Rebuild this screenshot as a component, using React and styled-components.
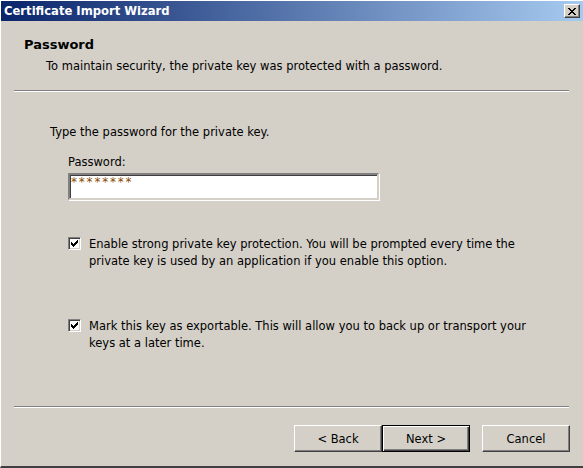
import React from 'react'
import styled, { createGlobalStyle } from 'styled-components'

const GlobalStyle = createGlobalStyle`
  html, body {
    margin: 0;
    padding: 0;
    background: #d4d0c8;
  }
  * {
    box-sizing: border-box;
  }
`

const Window = styled.div`
  width: 583px;
  height: 468px;
  display: flex;
  flex-direction: column;
  background: #d4d0c8;
  border-top: 1px solid #ffffff;
  border-left: 1px solid #ffffff;
  border-bottom: 2px solid #404040;
  font-family: "DejaVu Sans", Tahoma, sans-serif;
  font-size: 11.5px;
  color: #000;
  overflow: hidden;
`

const TitleBar = styled.div`
  height: 20px;
  flex: none;
  display: flex;
  align-items: center;
  justify-content: space-between;
  padding: 0 3px 0 3px;
  background: linear-gradient(to right, #0a246a, #a6caf0);
`

const TitleText = styled.div`
  color: #fff;
  font-weight: bold;
  font-size: 11.6px;
`

const CloseButton = styled.div`
  width: 16px;
  height: 14px;
  display: flex;
  align-items: center;
  justify-content: center;
  background: #d4d0c8;
  border: 1px solid;
  border-color: #fff #404040 #404040 #fff;
  box-shadow: inset -1px -1px #808080;
`

const Header = styled.div`
  padding: 16px 0 0 23px;
  height: 69px;
  flex: none;
`

const Heading = styled.div`
  font-weight: bold;
  font-size: 13px;
  line-height: 15px;
`

const Subtitle = styled.div`
  margin: 7px 0 0 22px;
  line-height: 14px;
`

const Separator = styled.div`
  flex: none;
  margin: 0 14px 0 13px;
  border-top: 1px solid #808080;
  border-bottom: 1px solid #ffffff;
`

const Body = styled.div`
  flex: 1;
  padding: 33px 0 0 49px;
`

const Prompt = styled.div`
  line-height: 14px;
`

const Field = styled.div`
  margin: 16px 0 0 18px;
`

const Label = styled.div`
  line-height: 14px;
  margin-bottom: 4px;
`

const PasswordBox = styled.div`
  width: 311px;
  height: 27px;
  background: #fff;
  border: 2px solid;
  border-color: #808080 #d4d0c8 #d4d0c8 #808080;
  box-shadow: inset 1px 1px #404040, 1px 1px #fff;
  padding: 2px 0 0 1px;
  color: #8b4a00;
  font-size: 12px;
  line-height: 10px;
  letter-spacing: 1.8px;
`

const CheckRow = styled.div`
  display: flex;
  align-items: flex-start;
  margin: ${p => p.$top}px 0 0 18px;
`

const Box = styled.div`
  width: 13px;
  height: 13px;
  flex: none;
  margin-top: 1px;
  background: #fff;
  border: 1px solid;
  border-color: #808080 #fff #fff #808080;
  box-shadow: inset 1px 1px #404040, inset -1px -1px #d4d0c8;
  display: flex;
  align-items: center;
  justify-content: center;
`

const CheckText = styled.div`
  margin-left: 8px;
  line-height: 17px;
  width: 448px;
`

const Footer = styled.div`
  flex: none;
  display: flex;
  justify-content: flex-end;
  padding: 17px 13px 14px 0;
`

const Button = styled.div`
  width: 88px;
  height: 27px;
  display: flex;
  align-items: center;
  justify-content: center;
  margin-left: ${p => p.$gap || 0}px;
  border: 1px solid;
  border-color: ${p => (p.$default ? '#000' : '#fff #404040 #404040 #fff')};
  box-shadow: ${p =>
    p.$default
      ? 'inset 1px 1px #fff, inset -1px -1px #404040, inset -2px -2px #808080'
      : 'inset -1px -1px #808080'};
`

const checkCols = [2, 3, 4, 3, 2, 1, 0]

const CheckMark = () => (
  <svg width='7' height='7' viewBox='0 0 7 7' shapeRendering='crispEdges'>
    {checkCols.map((y, x) => (
      <rect key={x} x={x} y={y} width='1' height='3' fill='#000' />
    ))}
  </svg>
)

const xRows = [
  [0, 1, 6, 7],
  [1, 2, 5, 6],
  [2, 3, 4, 5],
  [3, 4],
  [2, 3, 4, 5],
  [1, 2, 5, 6],
  [0, 1, 6, 7]
]

const CloseGlyph = () => (
  <svg width='8' height='7' viewBox='0 0 8 7' shapeRendering='crispEdges'>
    {xRows.map((row, y) =>
      row.map(x => <rect key={`${x}-${y}`} x={x} y={y} width='1' height='1' fill='#000' />)
    )}
  </svg>
)

const Check = ({ top, children }) => (
  <CheckRow $top={top}>
    <Box>
      <CheckMark />
    </Box>
    <CheckText>{children}</CheckText>
  </CheckRow>
)

const App = () => (
  <>
    <GlobalStyle />
    <Window>
      <TitleBar>
        <TitleText>Certificate Import Wizard</TitleText>
        <CloseButton>
          <CloseGlyph />
        </CloseButton>
      </TitleBar>
      <Header>
        <Heading>Password</Heading>
        <Subtitle>To maintain security, the private key was protected with a password.</Subtitle>
      </Header>
      <Separator />
      <Body>
        <Prompt>Type the password for the private key.</Prompt>
        <Field>
          <Label>Password:</Label>
          <PasswordBox>********</PasswordBox>
        </Field>
        <Check top={36}>
          Enable strong private key protection. You will be prompted every time the private
          key is used by an application if you enable this option.
        </Check>
        <Check top={48}>
          Mark this key as exportable. This will allow you to back up or transport your keys at
          a later time.
        </Check>
      </Body>
      <Separator />
      <Footer>
        <Button>&lt; Back</Button>
        <Button $default>Next &gt;</Button>
        <Button $gap={12}>Cancel</Button>
      </Footer>
    </Window>
  </>
)

export default App
